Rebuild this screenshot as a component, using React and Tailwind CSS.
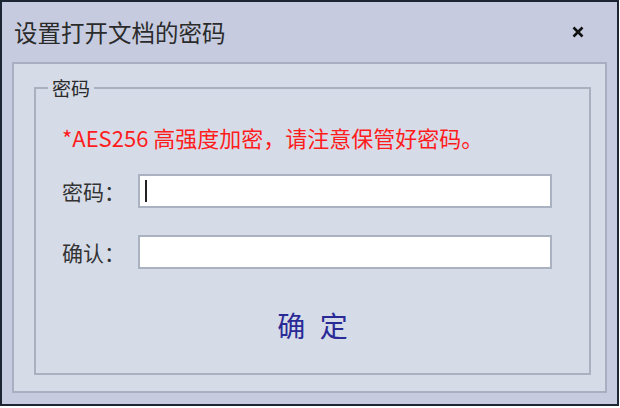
import React from "react";

const PasswordDialog = () => {
  return (
    <div
      className="w-[619px] h-[406px] border-2 border-[#1c2633] bg-[#c6cbdf] flex flex-col"
      style={{ fontFamily: '"Noto Sans CJK SC", "Noto Sans", sans-serif' }}
    >
      {/* Title bar */}
      <div className="h-[60px] flex items-center justify-between pl-[12px] pr-[33px]">
        <span className="text-[23.5px] leading-[30px] text-[#2b2b2b]">设置打开文档的密码</span>
        <svg width="12" height="12" viewBox="0 0 12 12">
          <path d="M1.5 1.5 L10.5 10.5 M10.5 1.5 L1.5 10.5" stroke="#111" strokeWidth="2.6" />
        </svg>
      </div>

      {/* Body panel */}
      <div className="ml-[10px] w-[595px] h-[331px] border-2 border-[#a8afc0] bg-[#d6dbe8]">
        <fieldset className="ml-[20px] mt-[14px] w-[557px] h-[297px] border-2 border-[#a9b0bf] flex flex-col">
          <legend className="ml-[12px] px-[4px] text-[19px] leading-[20px] text-[#2b2b2b]">密码</legend>

          <div className="pl-[26px] flex flex-col">
            <p className="mt-[27px] text-[22px] leading-[24px] text-[#ff1c1c]">
              *AES256 高强度加密，请注意保管好密码。
            </p>

            <div className="mt-[25px] flex items-center">
              <span className="w-[76px] text-[21px] leading-[26px] text-[#333]">密码：</span>
              <div className="w-[414px] h-[34px] border-2 border-[#aab1c1] bg-white flex items-center pl-[5px]">
                <div className="w-[2px] h-[22px] bg-[#222]" />
              </div>
            </div>

            <div className="mt-[27px] flex items-center">
              <span className="w-[76px] text-[21px] leading-[26px] text-[#333]">确认：</span>
              <div className="w-[414px] h-[34px] border-2 border-[#aab1c1] bg-white" />
            </div>
          </div>

          <div className="mt-[40px] flex justify-center">
            <button className="pl-[4px] text-[28px] leading-[32px] tracking-[4px] text-[#2a2a96]">确 定</button>
          </div>
        </fieldset>
      </div>
    </div>
  );
};

export default function App() {
  return <PasswordDialog />;
}
